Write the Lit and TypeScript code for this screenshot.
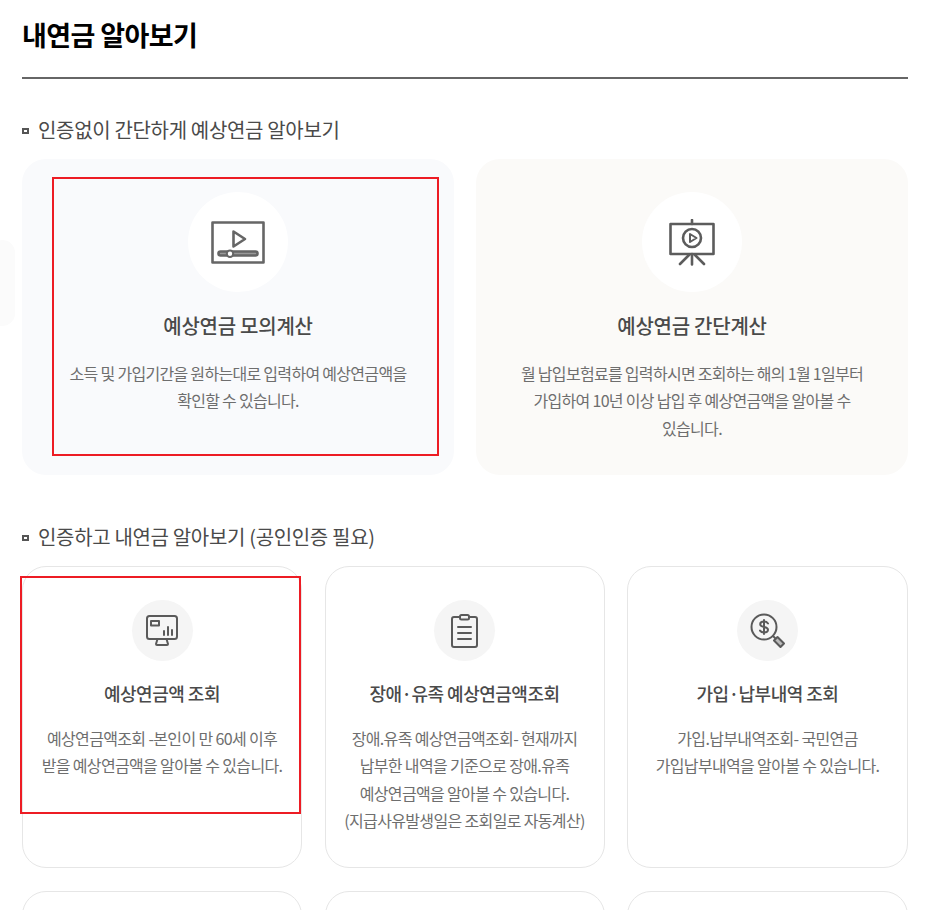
import { LitElement, html, css, svg } from "lit";
import { customElement } from "lit/decorators.js";

const icons: Record<string, unknown> = {
  video: svg`<g fill="none" stroke="#666" stroke-width="2.6" stroke-linejoin="round">
    <rect x="1.5" y="1.5" width="51" height="40"/>
    <path d="M22.5 10.5 L34 18 L22.5 25.5 Z"/>
    <rect x="7.5" y="30.5" width="39" height="4" rx="2" fill="#999"/>
    <circle cx="19" cy="32.7" r="3.2" fill="#fff" stroke-width="2"/></g>`,
  easel: svg`<g fill="none" stroke="#5c5c5c" stroke-width="2.6" stroke-linecap="round" stroke-linejoin="round">
    <path d="M23 1 V5"/>
    <rect x="1.5" y="5" width="43" height="30"/>
    <circle cx="23" cy="19" r="9"/>
    <path d="M21 15 L27.5 19 L21 23 Z" stroke-width="2"/>
    <path d="M23 35 V45.5 M20 36 L11 45 M26 36 L35 45"/></g>`,
  monitor: svg`<g fill="none" stroke="#5a5a5a" stroke-width="2" stroke-linecap="round" stroke-linejoin="round">
    <rect x="1" y="1" width="30" height="23" rx="2.5"/>
    <rect x="5" y="6" width="8" height="4.5"/>
    <path d="M18 20 V16 M22 20 V12 M26 20 V15"/>
    <path d="M11.5 24 L10 29 Q10 30 11 30 H21 Q22 30 22 29 L20.5 24"/></g>`,
  clip: svg`<g fill="none" stroke="#5a5a5a" stroke-width="2" stroke-linecap="round" stroke-linejoin="round">
    <path d="M8 3 H3 A2 2 0 0 0 1 5 V31 A2 2 0 0 0 3 33 H24 A2 2 0 0 0 26 31 V5 A2 2 0 0 0 24 3 H19"/>
    <rect x="9" y="1" width="9" height="4.5" rx="1.5"/>
    <path d="M7 13 H20 M7 19 H20 M7 25 H20"/></g>`,
  search: svg`<g fill="none" stroke="#5a5a5a" stroke-width="2" stroke-linecap="round" stroke-linejoin="round">
    <circle cx="14" cy="14" r="12.5"/>
    <path d="M23 23 L25.5 25.5"/>
    <path d="M24 27.5 L27.5 24 L34 30.5 L30.5 34 Z" fill="#bbb"/>
    <path d="M18 10.5 C17 9 15.5 8.6 14 8.6 C11.8 8.6 10.2 9.8 10.2 11.3 C10.2 13 12 13.5 14 13.9 C16 14.3 18 15 18 16.8 C18 18.4 16.2 19.4 14 19.4 C12.2 19.4 10.8 18.8 10 17.6 M14 7 V21"/></g>`,
};

@customElement("app-root")
export class AppRoot extends LitElement {
  static styles = css`
    :host {
      display: block;
      position: relative;
      height: 910px;
      overflow: hidden;
      background: #fff;
      padding: 0 22px;
      box-sizing: border-box;
      font-family: "Noto Sans CJK KR", "Noto Sans", sans-serif;
      color: #4a4a4a;
    }
    * { box-sizing: border-box; }
    h1 {
      margin: 0;
      height: 79px;
      padding-top: 16px;
      font-size: 27px;
      line-height: 38px;
      font-weight: 700;
      letter-spacing: -0.6px;
      color: #000;
      border-bottom: 2px solid #666;
    }
    h2 {
      margin: 0;
      display: flex;
      align-items: center;
      gap: 9px;
      font-size: 20px;
      line-height: 30px;
      font-weight: 400;
      letter-spacing: -0.33px;
      color: #4a4a4a;
    }
    h2::before {
      content: "";
      box-sizing: border-box;
      width: 7px;
      height: 6px;
      border: 2px solid #555;
      flex: none;
      margin-top: 1px;
    }
    .first { margin-top: 36px; }
    .second { margin-top: 47px; }
    .big-row {
      margin-top: 14px;
      display: grid;
      grid-template-columns: 432px 432px;
      gap: 22px;
    }
    .big {
      position: relative;
      height: 316px;
      border-radius: 24px;
      padding: 33px 40px 0;
      display: flex;
      flex-direction: column;
      align-items: center;
      text-align: center;
    }
    .blue { background: #f9fafc; }
    .warm { background: #fbfaf8; }
    .big .disc {
      width: 100px;
      height: 100px;
      border-radius: 50%;
      background: #fff;
      display: flex;
      align-items: center;
      justify-content: center;
      flex: none;
    }
    .big h3 {
      margin: 19px 0 0;
      font-size: 20px;
      line-height: 30px;
      font-weight: 500;
      letter-spacing: -0.25px;
      color: #4a4a4a;
    }
    .big p {
      margin: 18.5px 0 0;
      font-size: 16px;
      line-height: 27.5px;
      letter-spacing: -0.7px;
      color: #6e6e6e;
      font-weight: 400;
    }
    .small-grid {
      margin-top: 14px;
      display: grid;
      grid-template-columns: 280px 280px 281px;
      column-gap: 22.5px;
      row-gap: 23px;
    }
    .small {
      position: relative;
      height: 302px;
      border: 1px solid #e6e6e6;
      border-radius: 24px;
      padding: 33px 10px 0;
      display: flex;
      flex-direction: column;
      align-items: center;
      text-align: center;
    }
    .small .disc {
      width: 61px;
      height: 61px;
      border-radius: 50%;
      background: #f5f5f5;
      display: flex;
      align-items: center;
      justify-content: center;
      flex: none;
    }
    .small h3 {
      margin: 19px 0 0;
      font-size: 18px;
      line-height: 26px;
      font-weight: 500;
      letter-spacing: -0.5px;
      color: #4a4a4a;
    }
    .small p {
      margin: 18.5px 0 0;
      font-size: 16px;
      line-height: 27.5px;
      letter-spacing: -0.65px;
      color: #6e6e6e;
    }
    .mark {
      position: absolute;
      border: 2px solid #ed1c24;
      pointer-events: none;
    }
    .m1 { left: 30px; top: 18px; width: 387px; height: 279px; }
    .m2 { left: -3px; top: 9px; width: 281px; height: 238px; }
    .peek {
      position: absolute;
      left: -10px;
      top: 240px;
      width: 25px;
      height: 86px;
      border-radius: 16px;
      background: #fbfbfb;
    }
  `;

  private big(cls: string, icon: string, w: number, h: number, title: string, lines: string[], mark = false) {
    return html`<div class="big ${cls}">
      <div class="disc"><svg width=${w} height=${h} viewBox="0 0 ${w} ${h}">${icons[icon]}</svg></div>
      <h3>${title}</h3>
      <p>${lines.map((l) => html`${l}<br />`)}</p>
      ${mark ? html`<div class="mark m1"></div>` : ""}
    </div>`;
  }

  private small(icon: string, w: number, h: number, title: string, lines: string[], mark = false) {
    return html`<div class="small">
      <div class="disc"><svg width=${w} height=${h} viewBox="0 0 ${w} ${h}">${icons[icon]}</svg></div>
      <h3>${title}</h3>
      <p>${lines.map((l) => html`${l}<br />`)}</p>
      ${mark ? html`<div class="mark m2"></div>` : ""}
    </div>`;
  }

  render() {
    return html`
      <div class="peek"></div>
      <h1>내연금 알아보기</h1>
      <h2 class="first">인증없이 간단하게 예상연금 알아보기</h2>
      <div class="big-row">
        ${this.big("blue", "video", 54, 43, "예상연금 모의계산", ["소득 및 가입기간을 원하는대로 입력하여 예상연금액을", "확인할 수 있습니다."], true)}
        ${this.big("warm", "easel", 46, 47, "예상연금 간단계산", ["월 납입보험료를 입력하시면 조회하는 해의 1월 1일부터", "가입하여 10년 이상 납입 후 예상연금액을 알아볼 수", "있습니다."])}
      </div>
      <h2 class="second">인증하고 내연금 알아보기 (공인인증 필요)</h2>
      <div class="small-grid">
        ${this.small("monitor", 32, 31, "예상연금액 조회", ["예상연금액조회 -본인이 만 60세 이후", "받을 예상연금액을 알아볼 수 있습니다."], true)}
        ${this.small("clip", 27, 34, "장애·유족 예상연금액조회", ["장애.유족 예상연금액조회- 현재까지", "납부한 내역을 기준으로 장애.유족", "예상연금액을 알아볼 수 있습니다.", "(지급사유발생일은 조회일로 자동계산)"])}
        ${this.small("search", 35, 35, "가입·납부내역 조회", ["가입.납부내역조회- 국민연금", "가입납부내역을 알아볼 수 있습니다."])}
        <div class="small"></div>
        <div class="small"></div>
        <div class="small"></div>
      </div>
    `;
  }
}
